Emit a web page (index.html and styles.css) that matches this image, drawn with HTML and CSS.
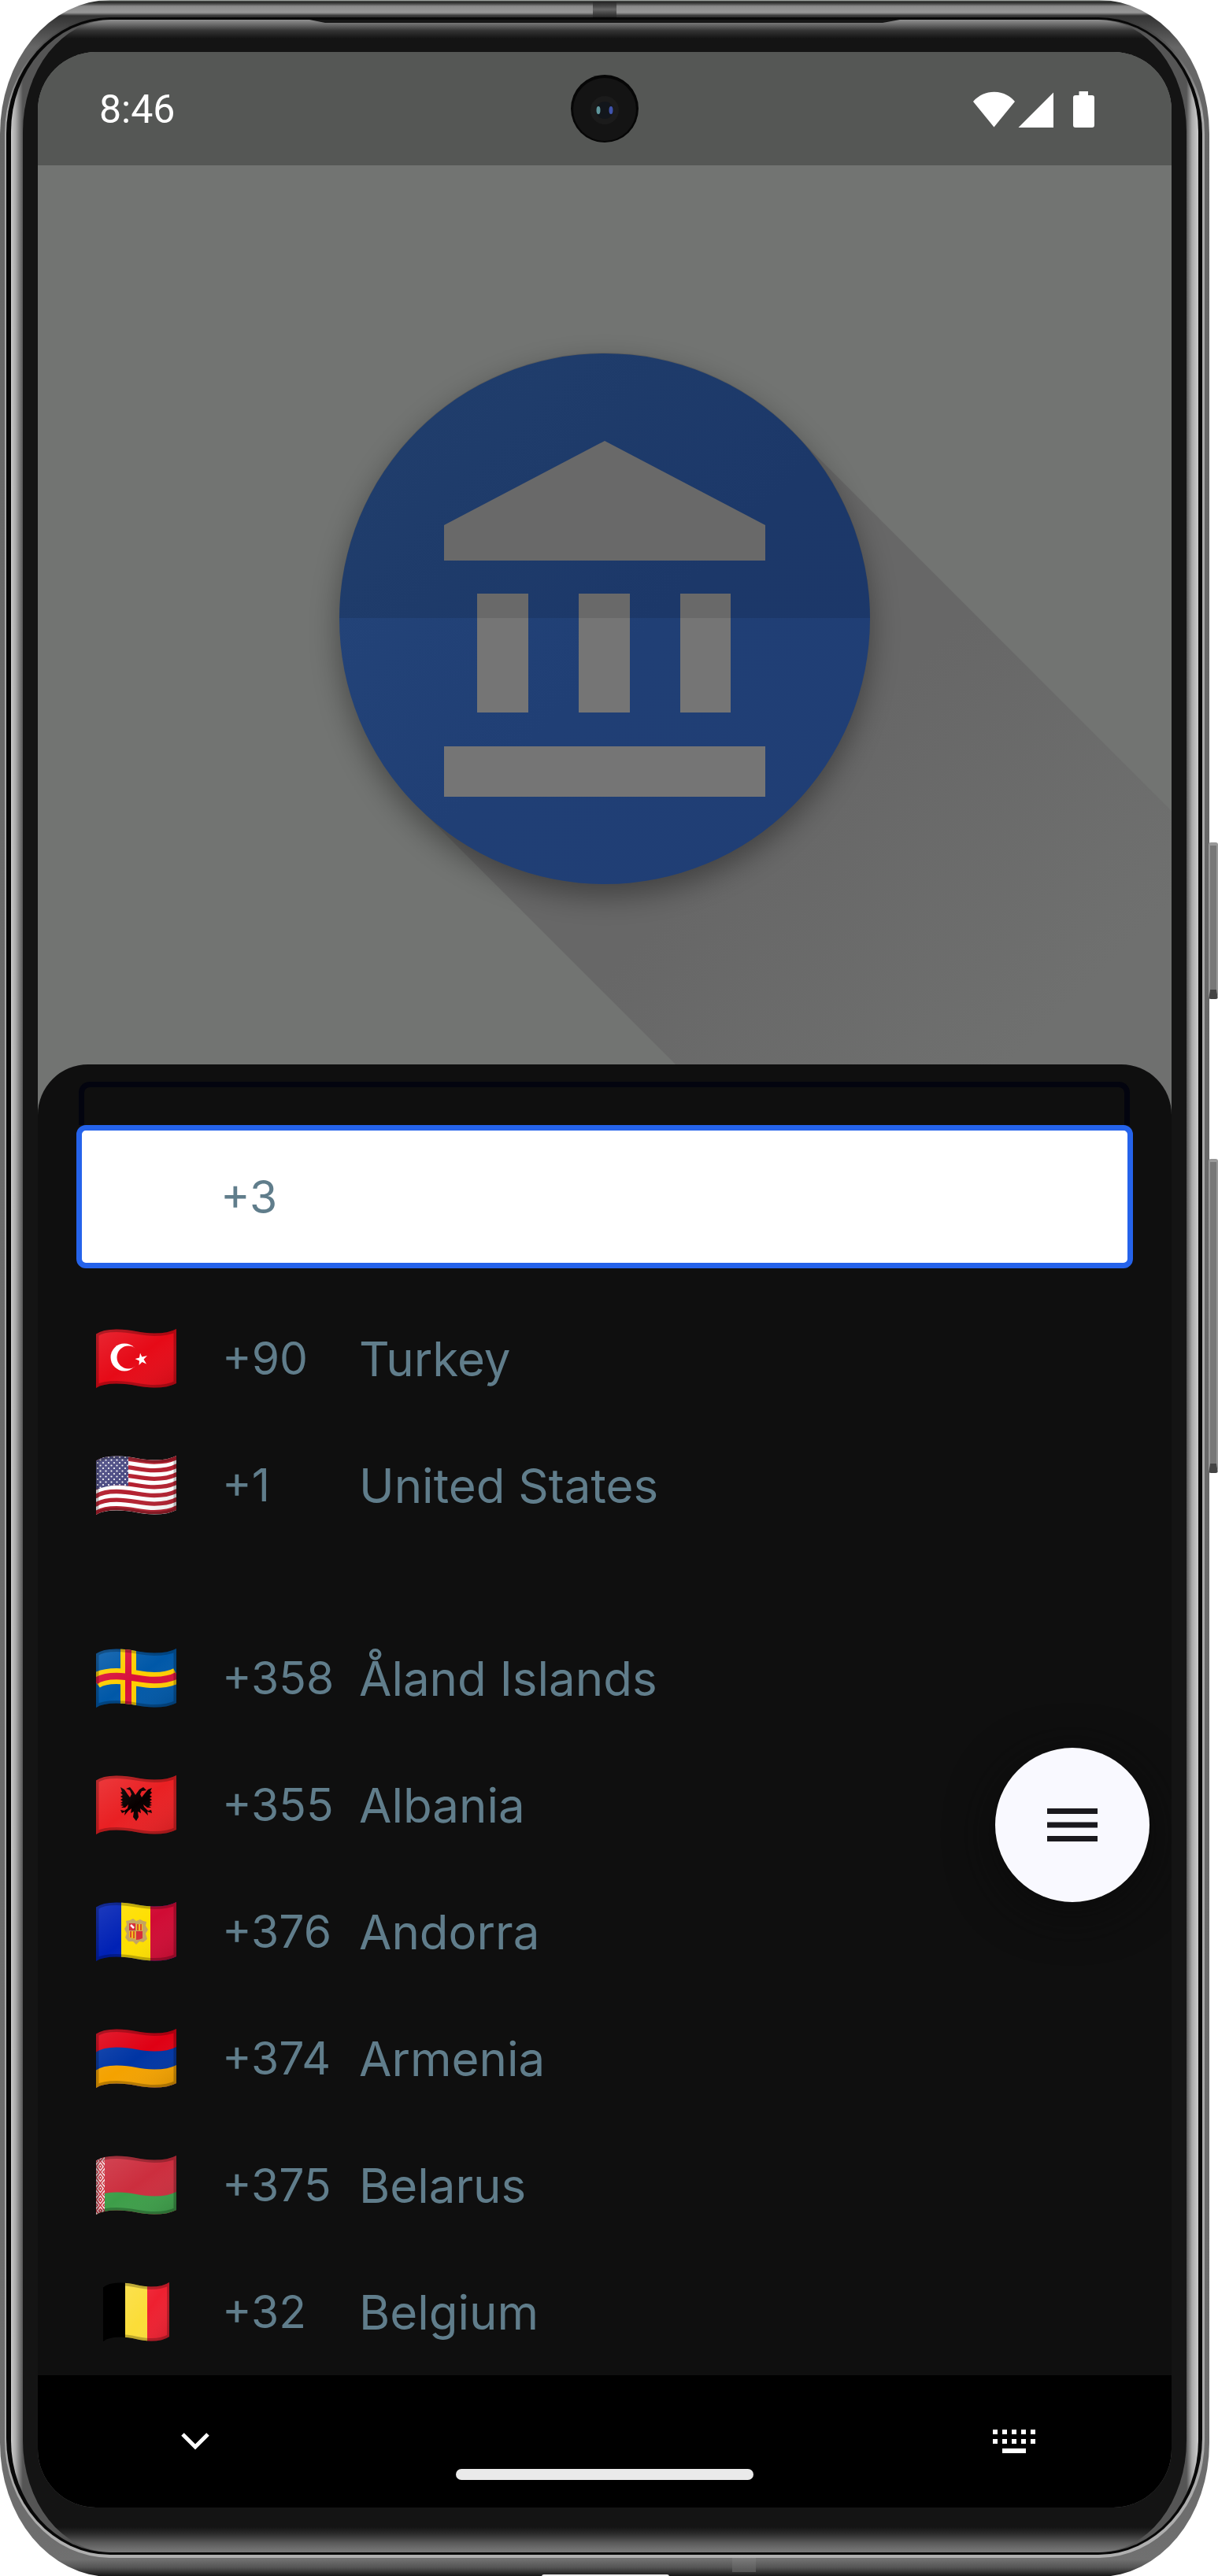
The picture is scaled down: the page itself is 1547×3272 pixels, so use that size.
FILE: index.html
```html
<!DOCTYPE html>
<html lang="en">
<head>
<meta charset="utf-8">
<meta name="viewport" content="width=device-width, initial-scale=1">
<title>Choose a country code</title>
<link rel="stylesheet" href="styles.css">
</head>
<body>
<svg class="defs" aria-hidden="true">
  <defs>
    <path id="cloth" d="M0 6.500Q8 .500 26 .500C46 .500 56 5.500 74 5.500Q92 5.500 102 0V69Q92 74.500 74 74.500C56 74.500 46 69.500 26 69.500Q8 69.500 0 75Z"/>
    <path id="fold" fill="none" d="M-1 7Q8 .500 26 .500C46 .500 56 5.500 74 5.500Q92 5.500 103 -.500"/>
    <clipPath id="wave"><use href="#cloth"/></clipPath>
    <linearGradient id="gloss" x1="0" y1="0" x2="1" y2="1">
      <stop offset="0" stop-color="#fff" stop-opacity=".12"/>
      <stop offset=".5" stop-color="#fff" stop-opacity="0"/>
      <stop offset="1" stop-color="#000" stop-opacity=".12"/>
    </linearGradient>
    <g id="shade">
      <use href="#cloth" fill="url(#gloss)"/>
      <use href="#cloth" fill="none" stroke="#000" stroke-opacity=".24" stroke-width="7"/>
    </g>
    <pattern id="stars" width="7" height="7" patternUnits="userSpaceOnUse">
      <circle cx="2" cy="2" r="1.100" fill="#fff"/><circle cx="5.500" cy="5.500" r="1.100" fill="#fff"/>
    </pattern>
    <pattern id="weave" width="11" height="14" patternUnits="userSpaceOnUse">
      <rect width="11" height="14" fill="#f6e9ea"/>
      <path d="M0 0L5.500 7L11 0M0 14L5.500 7L11 14M0 5L2 7L0 9M11 5L9 7L11 9M3.500 0L5.500 2.500L7.500 0M3.500 14L5.500 11.500L7.500 14" fill="none" stroke="#c8313e" stroke-width="1.500"/>
    </pattern>
  </defs>
</svg>

<div class="device">
  <span class="side-key power"></span>
  <span class="side-key volume"></span>
  <span class="antenna antenna-top"></span>
  <span class="antenna antenna-bottom"></span>
  <span class="port"></span>
  <div class="edge"><div class="seam"><div class="bevel"><div class="glass">
    <svg class="earpiece" viewBox="0 0 750 6" preserveAspectRatio="none" aria-hidden="true"><path d="M0 0H750L728 4H20Z" fill="#161616"/></svg>
    <main class="screen">
      <header class="status">
        <time>8:46</time>
        <span class="camera"><svg viewBox="0 0 86 86" aria-hidden="true">
          <circle cx="43" cy="43" r="43" fill="#060606"/><circle cx="43" cy="44" r="40" fill="#141414"/>
          <circle cx="43" cy="45" r="18" fill="#1b1b1b"/><circle cx="43" cy="45" r="11" fill="#12161b"/>
          <ellipse cx="35" cy="45" rx="2.500" ry="5" fill="#5f969b"/><ellipse cx="51" cy="45" rx="2.500" ry="5" fill="#4054ac"/>
        </svg></span>
        <svg class="signals" viewBox="0 0 154 46" role="img" aria-label="Wi-Fi, signal, battery">
          <path fill="#fff" d="M0 13C14-3.300 39-3.300 53 13L26.500 45.500ZM102 1.500V46H57.500ZM134.500 0H146V5H151Q154 5 154 8V43Q154 46 151 46H130Q127 46 127 43V8Q127 5 130 5H134.500Z"/>
        </svg>
      </header>

      <svg class="hero" viewBox="0 0 1440 1206" role="img" aria-label="Bank">
        <defs>
          <linearGradient id="cast" gradientUnits="userSpaceOnUse" x1="720" y1="576" x2="1260" y2="1116">
            <stop offset=".42" stop-color="#676767"/><stop offset="1" stop-color="#6f706f"/>
          </linearGradient>
          <linearGradient id="disc" x1="0" y1="0" x2="1" y2="1">
            <stop offset="0" stop-color="#25467a"/><stop offset=".55" stop-color="#203f75"/><stop offset="1" stop-color="#203e75"/>
          </linearGradient>
          <filter id="soft" x="-20%" y="-20%" width="140%" height="140%"><feGaussianBlur stdDeviation="18"/></filter>
        </defs>
        <rect width="1440" height="1206" fill="#727472"/>
        <path d="M958 338L1440 820V1206H874L482 814Z" fill="url(#cast)"/>
        <circle cx="720" cy="590" r="338" fill="#000" opacity=".36" filter="url(#soft)"/>
        <circle cx="720" cy="576" r="337" fill="url(#disc)"/>
        <path fill="#757575" d="M720 350L924 457V502H516V457ZM558 544H623V695H558ZM687 544H752V695H687ZM816 544H880V695H816ZM516 738H924V802H516Z"/>
        <path d="M383 575A337 337 0 0 1 1057 575Z" fill="#000" opacity=".1"/>
      </svg>

      <section class="sheet" aria-label="Country code">
        <div class="field-behind"></div>
        <input class="search" type="text" value="+3" aria-label="Search country code">
        <ul class="countries pinned">
          <li><button class="country" type="button">
            <svg class="flag" viewBox="0 0 102 75" aria-hidden="true"><g clip-path="url(#wave)"><rect width="102" height="75" fill="#e60a17"/><circle cx="36" cy="36" r="17.500" fill="#fff"/><circle cx="41" cy="36" r="14.500" fill="#e60a17"/><path d="M56 30.500L58.300 35.500L65 34L60.500 38.500L64 44.500L58.500 42L54.500 46L55 40.500L49.500 38L55 36.500Z" fill="#fff"/><use href="#shade"/></g></svg>
            <span>+90</span><span class="name">Turkey</span></button></li>
          <li><button class="country" type="button">
            <svg class="flag" viewBox="0 0 102 75" aria-hidden="true"><g clip-path="url(#wave)"><rect width="102" height="75" fill="#fff"/>
              <g stroke="#b3202f" stroke-width="5.300"><use href="#fold" y="2.600"/><use href="#fold" y="13.200"/><use href="#fold" y="23.800"/><use href="#fold" y="34.400"/><use href="#fold" y="45"/><use href="#fold" y="55.600"/><use href="#fold" y="66.200"/></g>
              <path d="M0 0H41V38.500Q20 35 0 43Z" fill="#46467f"/><path d="M0 0H41V38.500Q20 35 0 43Z" fill="url(#stars)"/><use href="#shade"/></g></svg>
            <span>+1</span><span class="name">United States</span></button></li>
        </ul>
        <ul class="countries">
          <li><button class="country" type="button">
            <svg class="flag" viewBox="0 0 102 75" aria-hidden="true"><g clip-path="url(#wave)"><rect width="102" height="75" fill="#0058a8"/>
              <path d="M31 0H51V75H31Z" fill="#ffce00"/><use href="#fold" y="34.500" stroke="#ffce00" stroke-width="20"/><path d="M37 0H45V75H37Z" fill="#d8103b"/><use href="#fold" y="34.500" stroke="#d8103b" stroke-width="8.500"/><use href="#shade"/></g></svg>
            <span>+358</span><span class="name">Åland Islands</span></button></li>
          <li><button class="country" type="button">
            <svg class="flag" viewBox="0 0 102 75" aria-hidden="true"><g clip-path="url(#wave)"><rect width="102" height="75" fill="#e92023"/>
              <path d="M50 25L47 20L43 15L38 17L43 19L45 24L43 28L40 24L36 18L31 15L33 21L31 22L34 25L31 27L34 29L31 31L34 33L31 35L34 36L31 38L35 39L32 41L37 41L41 37L40 42L36 45L31 44L33 48L37 46L36 51L41 45L45 42L44 48L48 46L47 53L51 58L54 53L53 46L57 48L56 42L61 46L66 51L65 46L71 48L70 44L66 45L61 40L60 37L65 41L70 41L67 39L71 38L68 36L71 35L68 33L71 31L68 29L71 27L68 25L71 22L69 20L71 16L66 18L61 24L58 28L56 24L58 20L64 19L60 15L55 18Z" fill="#080000"/><use href="#shade"/></g></svg>
            <span>+355</span><span class="name">Albania</span></button></li>
          <li><button class="country" type="button">
            <svg class="flag" viewBox="0 0 102 75" aria-hidden="true"><g clip-path="url(#wave)"><rect width="102" height="75" fill="#0021b5"/><path d="M32 0H69V75H32Z" fill="#fedf00"/><path d="M69 0H102V75H69Z" fill="#d00b34"/>
              <path d="M38 24L43 23L47 21L51 24L56 22L60 24L64 25L63 30L66 35L63 40L65 47L60 51L55 50L51 54L47 50L41 50L37 45L39 40L36 34L39 29Z" fill="#c4a45f"/><path d="M42 27H50V36H42ZM51 37H59V46Q55 48 51 48Z" fill="#d82c35"/><path d="M51 28H59V36H51ZM42 37H50V47L42 45Z" fill="#f7bd1d"/><path d="M53 28V36M57 28V36M44 37V45M48 37V46" stroke="#cf2a2a" stroke-width="1.500"/><path d="M44 29L48 33" stroke="#fff" stroke-width="2.500"/><use href="#shade"/></g></svg>
            <span>+376</span><span class="name">Andorra</span></button></li>
          <li><button class="country" type="button">
            <svg class="flag" viewBox="0 0 102 75" aria-hidden="true"><g clip-path="url(#wave)"><rect width="102" height="75" fill="#df0014"/><use href="#cloth" y="23" fill="#0035a4"/><use href="#cloth" y="46" fill="#f4a200"/><use href="#shade"/></g></svg>
            <span>+374</span><span class="name">Armenia</span></button></li>
          <li><button class="country" type="button">
            <svg class="flag" viewBox="0 0 102 75" aria-hidden="true"><g clip-path="url(#wave)"><rect width="102" height="75" fill="#cc2e3e"/><use href="#cloth" y="46" fill="#3d9e49"/><rect width="11" height="75" fill="url(#weave)"/><use href="#shade"/></g></svg>
            <span>+375</span><span class="name">Belarus</span></button></li>
          <li><button class="country" type="button">
            <svg class="flag flag-narrow" viewBox="0 0 102 75" preserveAspectRatio="none" aria-hidden="true"><g clip-path="url(#wave)"><path d="M0 0H34V75H0Z"/><path d="M34 0H68V75H34Z" fill="#fbdd38"/><path d="M68 0H102V75H68Z" fill="#ee2030"/><path d="M34 0H102V75H34Z" fill="url(#gloss)"/><use href="#cloth" fill="none" stroke="#000" stroke-opacity=".24" stroke-width="7"/></g></svg>
            <span>+32</span><span class="name">Belgium</span></button></li>
        </ul>
        <button class="fab" type="button" aria-label="Menu">
          <svg viewBox="0 0 64 42" aria-hidden="true"><path d="M0 0H64V7H0ZM0 17.500H64V24.500H0ZM0 35H64V42H0Z" fill="#1a191e"/></svg>
        </button>
      </section>

      <nav class="system-nav" aria-label="System">
        <button class="key" type="button" aria-label="Hide keyboard"><svg width="36" height="22" viewBox="0 0 36 22"><path d="M2 2L18 18L34 2" fill="none" stroke="#fff" stroke-width="5"/></svg></button>
        <span class="home-bar"></span>
        <button class="key" type="button" aria-label="Switch keyboard"><svg width="54" height="30" viewBox="0 0 54 30"><path fill="#fff" d="M0 0h6v6h-6zM12 0h6v6h-6zM24 0h6v6h-6zM36 0h6v6h-6zM48 0h6v6h-6zM0 12h6v6h-6zM12 12h6v6h-6zM24 12h6v6h-6zM36 12h6v6h-6zM48 12h6v6h-6zM12 24h30v6h-30z"/></svg></button>
      </nav>
    </main>
  </div></div></div></div>
</div>
</body>
</html>
```
FILE: styles.css
```css
* { box-sizing: border-box; }

body { margin: 0; background: #fff; font-family: Inter, "Open Sans", sans-serif; }

button { border: 0; padding: 0; background: none; color: inherit; font: inherit; cursor: pointer; }

svg { display: block; }

.defs { position: absolute; width: 0; height: 0; }

/* Phone shell: metal band, bright edge, dark seam, bevel, glass */
.device {
  position: relative;
  margin-right: 11px;
  padding: 20px 6px 24px;
  border-radius: 140px / 170px;
  background: linear-gradient(to bottom,
    #c5cac6 0, #202220 2px, #4a4a4a 5px, #8a8a8a 8px, #979797 16px, #333 20px,
    #666 60px, #6d6d6d calc(100% - 60px), #707070 calc(100% - 22px), #555 calc(100% - 12px), #111 100%);
}

.edge {
  padding: 2px 3px 4px 2px;
  border-radius: 134px / 150px;
  background: linear-gradient(to bottom, #333 0, #aaa 120px, #aaa calc(100% - 120px), #b0b0b0 100%);
}

.seam {
  padding: 3px 5px 3px 6px;
  border-radius: 132px / 148px;
  background: #080808;
}

.bevel {
  padding: 0 15px;
  border-radius: 126px / 142px;
  background: linear-gradient(to right, #ccc 0, #aaa 6px, #555 15px, #555 calc(100% - 15px), #aaa calc(100% - 8px), #ccc 100%);
}

.glass {
  position: relative;
  padding: 41px 19px 57px;
  border-radius: 112px / 142px;
  background: linear-gradient(to bottom,
    #909090 0, #6b6b6b 6px, #333 14px, #141414 24px,
    #141414 calc(100% - 32px), #2a2a2a calc(100% - 24px), #5a5a5a calc(100% - 12px), #7b7b7b 100%);
}

.earpiece { position: absolute; top: 0; left: 50%; width: 750px; height: 6px; margin-left: -375px; }

.side-key {
  position: absolute;
  right: -11px;
  width: 12px;
  border-radius: 3px;
  border: 2px solid #999;
  border-top-width: 4px;
  border-bottom: 12px solid #444;
  background: #777;
}
.power { top: 1070px; height: 199px; }
.volume { top: 1472px; height: 399px; }

.antenna { position: absolute; width: 30px; }
.antenna-top { top: 2px; left: 753px; height: 20px; background: linear-gradient(#222, #666, #222); }
.antenna-bottom { bottom: 6px; left: 930px; height: 18px; background: linear-gradient(#7c7c7c, #555); }
.port { position: absolute; bottom: 0; left: 688px; width: 162px; height: 3px; border-radius: 6px 6px 0 0; background: #eee; }

.screen {
  position: relative;
  overflow: hidden;
  border-radius: 74px;
  background: #727472;
}

/* Status bar */
.status {
  position: relative;
  display: flex;
  align-items: center;
  justify-content: space-between;
  height: 144px;
  padding: 2px 98px 0 78px;
  background: #555755;
  color: #fff;
  font: 400 50px/56px Roboto, sans-serif;
}
.camera { position: absolute; top: 29px; left: 50%; width: 86px; height: 86px; margin-left: -43px; }
.signals { width: 154px; height: 46px; }

/* The sheet's rounded corners overlap the foot of the picture */
.hero { width: 100%; height: auto; margin-bottom: -64px; }

/* Bottom sheet */
.sheet {
  position: relative;
  padding-top: 22px;
  border-radius: 64px 64px 0 0;
  background: #0f0f0f;
  color: #607d8b;
  font-size: 57px;
  line-height: 72px;
}

.field-behind {
  height: 55px;
  margin: 0 53px 0 52px;
  border: 7px solid #03040f;
  border-bottom: 0;
  border-radius: 14px 14px 0 0;
}

.search {
  display: block;
  width: calc(100% - 98px);
  height: 182px;
  margin: 0 49px;
  padding: 0 24px 0 176px;
  border: 7px solid #2563eb;
  border-radius: 12px;
  outline: 0;
  background: #fff;
  color: inherit;
  font: inherit;
}

.countries { margin: 0; padding: 0; list-style: none; }
.pinned { padding: 34px 0 84px; }

.country {
  display: grid;
  grid-template-columns: 160px 174px 1fr;
  align-items: center;
  width: 100%;
  height: 161px;
  padding: 0 74px;
  text-align: left;
}
.name { font-size: 60px; }

.flag { width: 102px; height: 75px; }
.flag-narrow { width: 84px; margin-left: 9px; }

.fab {
  position: absolute;
  top: 868px;
  right: 28px;
  display: grid;
  place-items: center;
  width: 196px;
  height: 196px;
  border-radius: 50%;
  background: #f9f9ff;
  box-shadow: 0 12px 60px #0b0b0b;
}
.fab svg { width: 64px; height: 42px; }

/* System navigation */
.system-nav {
  display: flex;
  align-items: center;
  justify-content: space-between;
  height: 168px;
  padding: 0 170px;
  background: #000;
}
.key { display: grid; place-items: center; width: 60px; height: 60px; }
.home-bar { align-self: flex-end; width: 378px; height: 14px; margin-bottom: 35px; border-radius: 7px; background: #eaeaea; }
```
